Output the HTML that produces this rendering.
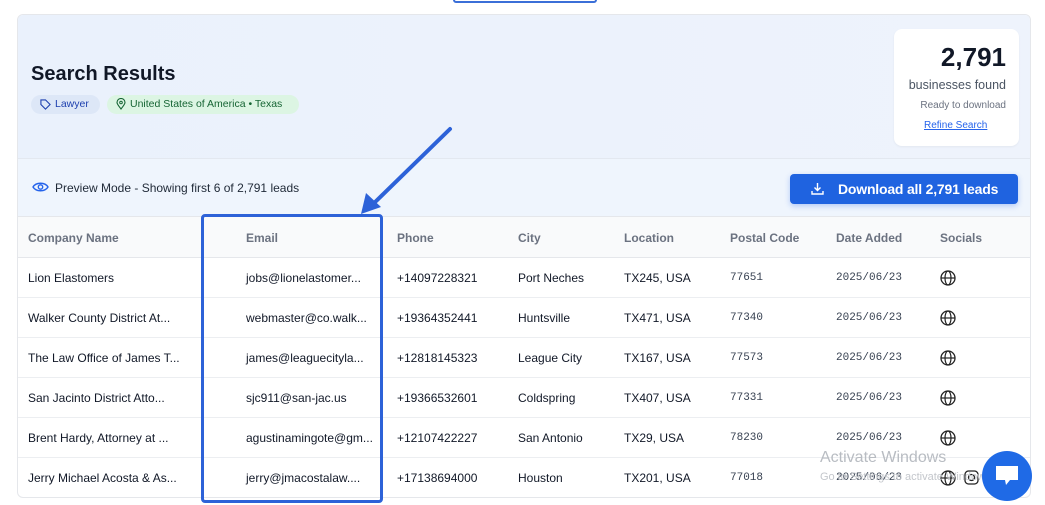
<!DOCTYPE html>
<html><head><meta charset="utf-8"><style>
*{box-sizing:border-box;margin:0;padding:0}
body{width:1045px;height:505px;background:#fff;font-family:"Liberation Sans",sans-serif;position:relative;overflow:hidden;color:#111827}
.a{position:absolute;white-space:nowrap}
.card{position:absolute;left:17px;top:14px;width:1014px;height:484px;border:1px solid #e5e7eb;border-radius:6px;overflow:hidden;background:#fff}
.hdr{position:absolute;left:0;top:0;width:100%;height:144px;background:linear-gradient(90deg,#eaf1fc,#eef3fc);border-bottom:1px solid #e3e8f0}
.bar{position:absolute;left:0;top:144px;width:100%;height:58px;background:#eff5fd;border-bottom:1px solid #e5e7eb}
.th{position:absolute;left:0;top:202px;width:100%;height:41px;background:#f9fafb;border-bottom:1px solid #e5e7eb}
.row{position:absolute;left:0;width:100%;height:40px;border-bottom:1px solid #eceef1}
.c{position:absolute;top:13px;font-size:12px;color:#111827}
.h{position:absolute;top:14px;font-size:12px;color:#6b7280;font-weight:bold}
.m{font-family:"Liberation Mono",monospace;font-size:11px;color:#374151;top:14px}
</style></head><body>
<div class="a" style="left:453px;top:-3px;width:144px;height:6px;border:2px solid #3b6fd8;border-radius:4px"></div>
<div class="card">
 <div class="hdr">
  <div class="a" style="left:13px;top:48px;font-size:20px;font-weight:bold;color:#111827">Search Results</div>
  <div class="a" style="left:13px;top:80px;height:19px;width:69px;border-radius:10px;background:#dde7f7;font-size:10.5px;color:#1e40af;padding:3px 0 0 24px">Lawyer</div>
  <svg class="a" style="left:22px;top:84px" width="11" height="11" viewBox="0 0 12 12"><path d="M1 1h5l5 5-5 5-5-5z" fill="none" stroke="#1e40af" stroke-width="1.2"/></svg>
  <div class="a" style="left:89px;top:80px;height:19px;width:192px;border-radius:10px;background:#dcf5e3;font-size:10.5px;color:#166534;padding:3px 0 0 23px">United States of America • Texas</div>
  <svg class="a" style="left:98px;top:83px" width="10" height="12" viewBox="0 0 10 12"><path d="M5 11C2 7 1 6 1 4.5a4 4 0 018 0C9 6 8 7 5 11z" fill="none" stroke="#166534" stroke-width="1.1"/><circle cx="5" cy="4.5" r="1.3" fill="none" stroke="#166534"/></svg>
  <div class="a" style="left:876px;top:14px;width:125px;height:117px;background:#fff;border-radius:8px;box-shadow:0 1px 2px rgba(0,0,0,.05)">
   <div class="a" style="right:13px;top:13px;font-size:26px;font-weight:bold">2,791</div>
   <div class="a" style="right:13px;top:49px;font-size:12.5px;color:#4b5563">businesses found</div>
   <div class="a" style="right:13px;top:71px;font-size:10px;color:#6b7280">Ready to download</div>
   <div class="a" style="left:30px;top:91px;font-size:10px;color:#2563eb;text-decoration:underline">Refine Search</div>
  </div>
 </div>
 <div class="bar">
  <svg class="a" style="left:14px;top:22px" width="17" height="12" viewBox="0 0 17 12"><path d="M1 6C4 1 13 1 16 6 13 11 4 11 1 6z" fill="none" stroke="#2563eb" stroke-width="1.4"/><circle cx="8.5" cy="6" r="2.2" fill="none" stroke="#2563eb" stroke-width="1.4"/></svg>
  <div class="a" style="left:37px;top:22px;font-size:12px;color:#1f2937">Preview Mode - Showing first 6 of 2,791 leads</div>
  <div class="a" style="left:772px;top:15px;width:228px;height:30px;background:#1f63e0;border-radius:4px;box-shadow:0 2px 6px rgba(37,99,235,.3)">
   <svg class="a" style="left:21px;top:8px" width="13" height="13" viewBox="0 0 13 13"><path d="M6.5 1v7M3.5 5.5l3 3 3-3M1 9v3h11V9" fill="none" stroke="#fff" stroke-width="1.4"/></svg>
   <div class="a" style="left:48px;top:7px;font-size:14px;font-weight:bold;color:#fff;letter-spacing:-0.2px">Download all 2,791 leads</div>
  </div>
 </div>
 <div class="th">
  <div class="h" style="left:10px">Company Name</div><div class="h" style="left:228px">Email</div><div class="h" style="left:379px">Phone</div><div class="h" style="left:500px">City</div><div class="h" style="left:606px">Location</div><div class="h" style="left:712px">Postal Code</div><div class="h" style="left:818px">Date Added</div><div class="h" style="left:922px">Socials</div>
 </div>
 <div class="row" style="top:243px"><div class="c" style="left:10px">Lion Elastomers</div><div class="c" style="left:228px">jobs@lionelastomer...</div><div class="c" style="left:379px">+14097228321</div><div class="c" style="left:500px">Port Neches</div><div class="c" style="left:606px">TX245, USA</div><div class="c m" style="left:712px">77651</div><div class="c m" style="left:818px">2025/06/23</div><svg class="a" style="left:922px;top:12px" width="16" height="16" viewBox="0 0 16 16"><circle cx="8" cy="8" r="7" fill="none" stroke="#222" stroke-width="1.3"/><ellipse cx="8" cy="8" rx="3" ry="7" fill="none" stroke="#222" stroke-width="1.2"/><path d="M1 8h14" stroke="#222" stroke-width="1.2"/></svg></div>
 <div class="row" style="top:283px"><div class="c" style="left:10px">Walker County District At...</div><div class="c" style="left:228px">webmaster@co.walk...</div><div class="c" style="left:379px">+19364352441</div><div class="c" style="left:500px">Huntsville</div><div class="c" style="left:606px">TX471, USA</div><div class="c m" style="left:712px">77340</div><div class="c m" style="left:818px">2025/06/23</div><svg class="a" style="left:922px;top:12px" width="16" height="16" viewBox="0 0 16 16"><circle cx="8" cy="8" r="7" fill="none" stroke="#222" stroke-width="1.3"/><ellipse cx="8" cy="8" rx="3" ry="7" fill="none" stroke="#222" stroke-width="1.2"/><path d="M1 8h14" stroke="#222" stroke-width="1.2"/></svg></div>
 <div class="row" style="top:323px"><div class="c" style="left:10px">The Law Office of James T...</div><div class="c" style="left:228px">james@leaguecityla...</div><div class="c" style="left:379px">+12818145323</div><div class="c" style="left:500px">League City</div><div class="c" style="left:606px">TX167, USA</div><div class="c m" style="left:712px">77573</div><div class="c m" style="left:818px">2025/06/23</div><svg class="a" style="left:922px;top:12px" width="16" height="16" viewBox="0 0 16 16"><circle cx="8" cy="8" r="7" fill="none" stroke="#222" stroke-width="1.3"/><ellipse cx="8" cy="8" rx="3" ry="7" fill="none" stroke="#222" stroke-width="1.2"/><path d="M1 8h14" stroke="#222" stroke-width="1.2"/></svg></div>
 <div class="row" style="top:363px"><div class="c" style="left:10px">San Jacinto District Atto...</div><div class="c" style="left:228px">sjc911@san-jac.us</div><div class="c" style="left:379px">+19366532601</div><div class="c" style="left:500px">Coldspring</div><div class="c" style="left:606px">TX407, USA</div><div class="c m" style="left:712px">77331</div><div class="c m" style="left:818px">2025/06/23</div><svg class="a" style="left:922px;top:12px" width="16" height="16" viewBox="0 0 16 16"><circle cx="8" cy="8" r="7" fill="none" stroke="#222" stroke-width="1.3"/><ellipse cx="8" cy="8" rx="3" ry="7" fill="none" stroke="#222" stroke-width="1.2"/><path d="M1 8h14" stroke="#222" stroke-width="1.2"/></svg></div>
 <div class="row" style="top:403px"><div class="c" style="left:10px">Brent Hardy, Attorney at ...</div><div class="c" style="left:228px">agustinamingote@gm...</div><div class="c" style="left:379px">+12107422227</div><div class="c" style="left:500px">San Antonio</div><div class="c" style="left:606px">TX29, USA</div><div class="c m" style="left:712px">78230</div><div class="c m" style="left:818px">2025/06/23</div><svg class="a" style="left:922px;top:12px" width="16" height="16" viewBox="0 0 16 16"><circle cx="8" cy="8" r="7" fill="none" stroke="#222" stroke-width="1.3"/><ellipse cx="8" cy="8" rx="3" ry="7" fill="none" stroke="#222" stroke-width="1.2"/><path d="M1 8h14" stroke="#222" stroke-width="1.2"/></svg></div>
 <div class="row" style="top:443px;border-bottom:none"><div class="c" style="left:10px">Jerry Michael Acosta &amp; As...</div><div class="c" style="left:228px">jerry@jmacostalaw....</div><div class="c" style="left:379px">+17138694000</div><div class="c" style="left:500px">Houston</div><div class="c" style="left:606px">TX201, USA</div><div class="c m" style="left:712px">77018</div><div class="c m" style="left:818px">2025/06/23</div><svg class="a" style="left:922px;top:12px" width="16" height="16" viewBox="0 0 16 16"><circle cx="8" cy="8" r="7" fill="none" stroke="#222" stroke-width="1.3"/><ellipse cx="8" cy="8" rx="3" ry="7" fill="none" stroke="#222" stroke-width="1.2"/><path d="M1 8h14" stroke="#222" stroke-width="1.2"/></svg><svg class="a" style="left:946px;top:12px" width="15" height="15" viewBox="0 0 15 15"><rect x="1" y="1" width="13" height="13" rx="3.5" fill="none" stroke="#222" stroke-width="1.3"/><circle cx="7.5" cy="7.5" r="3" fill="none" stroke="#222" stroke-width="1.3"/></svg></div>
</div>
<div class="a" style="left:820px;top:449px;font-size:16px;color:#b8bcc2">Activate Windows</div>
<div class="a" style="left:820px;top:471px;font-size:11px;color:#c4c7cc">Go to Settings to activate Windows.</div>
<div class="a" style="left:201px;top:214px;width:182px;height:289px;border:3px solid #2d62d8;border-radius:4px"></div>
<svg class="a" style="left:0;top:0" width="1045" height="505"><path d="M450 129L370 207" stroke="#2d62d8" stroke-width="4" stroke-linecap="round"/><path d="M361 214L366 193 381 207z" fill="#2d62d8"/></svg>
<div class="a" style="left:982px;top:451px;width:50px;height:50px;border-radius:50%;background:#1f6ae6"></div>
<svg class="a" style="left:993px;top:463px" width="28" height="26" viewBox="0 0 28 26"><path d="M3 3h22v14H17l-4 5-1-5H3z" fill="#fff"/></svg>
</body></html>
